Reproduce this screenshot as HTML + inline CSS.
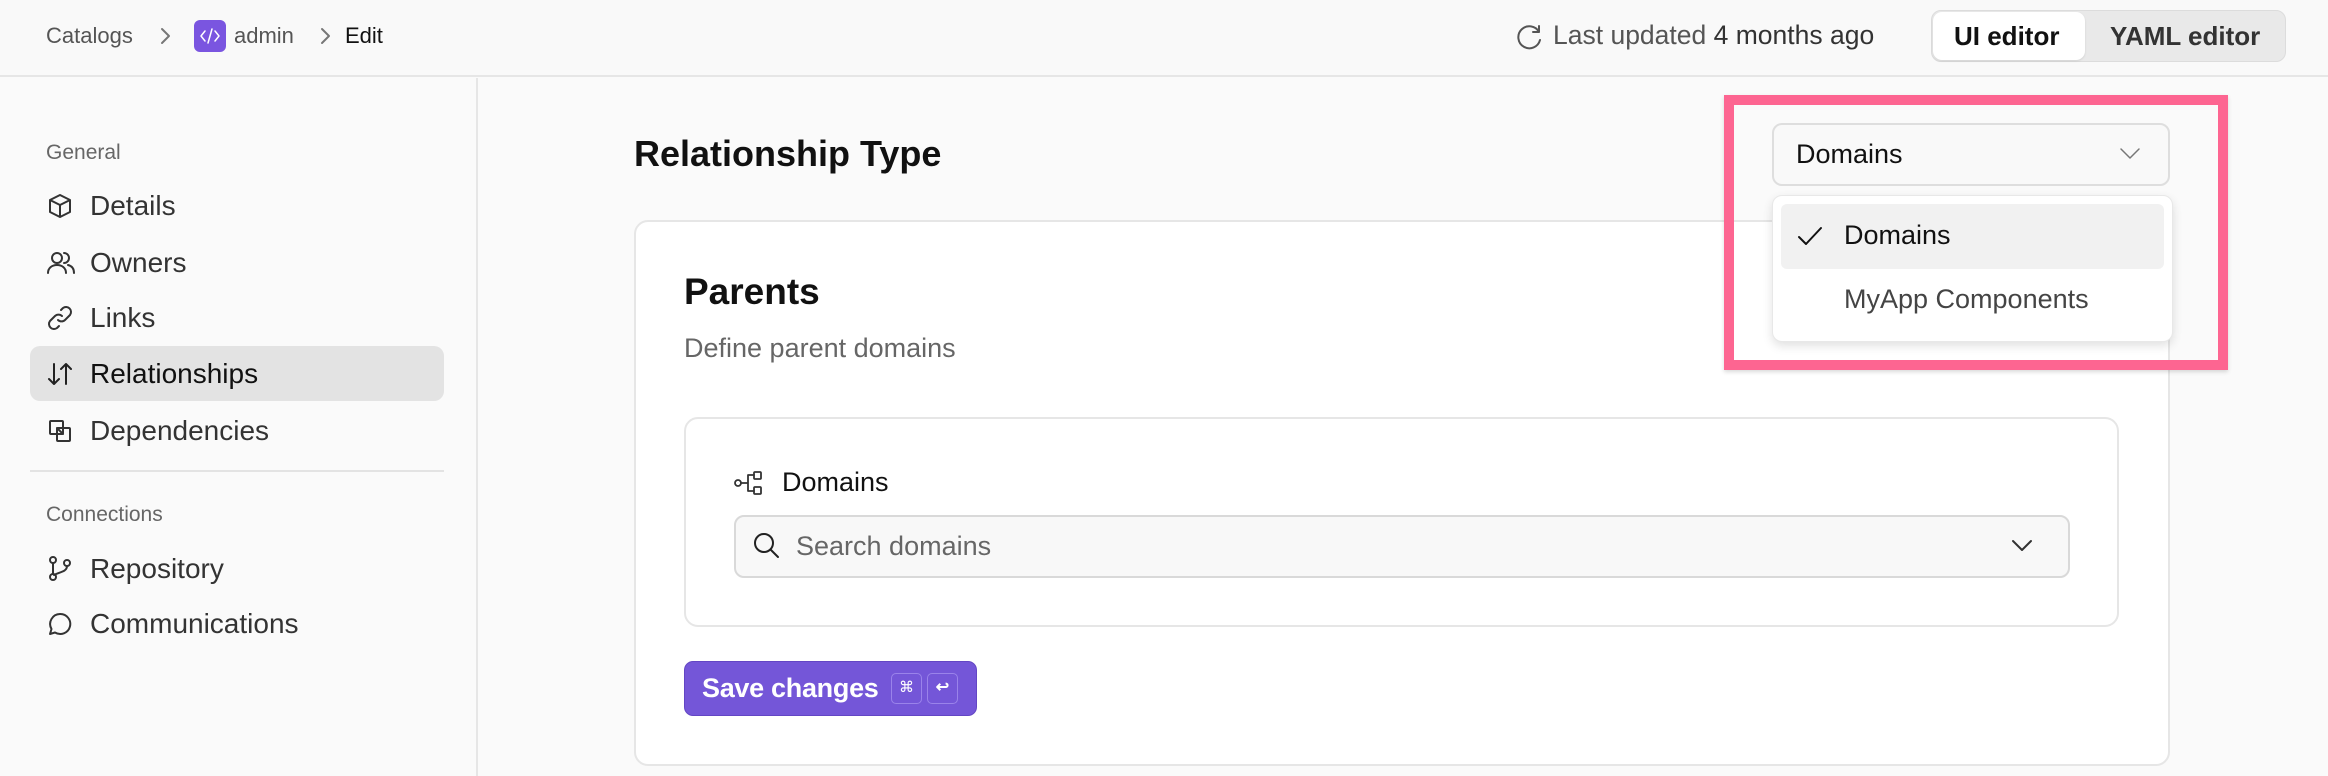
<!DOCTYPE html>
<html><head><meta charset="utf-8"><style>
*{box-sizing:border-box;margin:0;padding:0}
body{width:2328px;height:776px;overflow:hidden;background:#fafafa;font-family:"Liberation Sans",sans-serif;color:#1a1a1a;position:relative}
.a{position:absolute;white-space:nowrap}
svg{position:absolute;fill:none;stroke:#333;stroke-width:2;stroke-linecap:round;stroke-linejoin:round}
.nav{font-size:28px;color:#333}
</style></head><body>
<div class="a" style="left:0;top:0;width:2328px;height:77px;border-bottom:2px solid #e6e6e6;background:#f9f9f9"></div>
<div class="a" style="left:46px;top:23px;font-size:22px;color:#555">Catalogs</div>
<svg style="left:158px;top:26px" width="14" height="20" viewBox="0 0 14 20"><path d="M4 3l7 7-7 7" stroke="#777"/></svg>
<div class="a" style="left:194px;top:20px;width:32px;height:32px;background:#7a55e0;border-radius:6px"></div>
<svg style="left:198px;top:26px" width="24" height="20" viewBox="0 0 24 20"><path d="M7 5l-4 5 4 5M17 5l4 5-4 5M14 3l-4 14" stroke="#fff" stroke-width="1.5"/></svg>
<div class="a" style="left:234px;top:23px;font-size:22px;color:#555">admin</div>
<svg style="left:318px;top:26px" width="14" height="20" viewBox="0 0 14 20"><path d="M4 3l7 7-7 7" stroke="#777"/></svg>
<div class="a" style="left:345px;top:23px;font-size:22px;color:#111">Edit</div>
<svg style="left:1515px;top:22px" width="30" height="30" viewBox="0 0 30 30"><path d="M24 10A11 11 0 1 0 25 18M24 4v6h-6" stroke="#555"/></svg>
<div class="a" style="left:1553px;top:20px;font-size:26.5px;color:#555">Last updated <span style="color:#333">4 months ago</span></div>
<div class="a" style="left:1931px;top:10px;width:355px;height:52px;background:#e9e9e9;border:1.5px solid #dcdcdc;border-radius:10px"></div>
<div class="a" style="left:1933px;top:12px;width:152px;height:48px;background:#fff;border-radius:9px;box-shadow:0 1px 2px rgba(0,0,0,.1)"></div>
<div class="a" style="left:1954px;top:21px;font-size:26px;font-weight:bold;color:#111">UI editor</div>
<div class="a" style="left:2110px;top:21px;font-size:26px;font-weight:bold;color:#333">YAML editor</div>
<div class="a" style="left:476px;top:78px;width:2px;height:698px;background:#e6e6e6"></div>
<div class="a" style="left:46px;top:141px;font-size:21px;color:#666">General</div>
<div class="a" style="left:30px;top:346px;width:414px;height:55px;background:#e3e3e3;border-radius:10px"></div>
<svg style="left:46px;top:192px" width="28" height="28" viewBox="0 0 28 28"><path d="M14 3l10 5v12l-10 5-10-5V8zM4 8l10 5 10-5M14 13v12"/></svg>
<div class="a nav" style="left:90px;top:190px">Details</div>
<svg style="left:46px;top:249px" width="30" height="28" viewBox="0 0 30 28"><circle cx="11" cy="9" r="5"/><path d="M2 24c0-5 4-8 9-8s9 3 9 8M18 4a5 5 0 0 1 0 10M22 16c4 1 6 4 6 8"/></svg>
<div class="a nav" style="left:90px;top:247px">Owners</div>
<svg style="left:46px;top:304px" width="28" height="28" viewBox="0 0 28 28"><path d="M12 16a5 5 0 0 0 7 0l5-5a5 5 0 0 0-7-7l-2 2M16 12a5 5 0 0 0-7 0l-5 5a5 5 0 0 0 7 7l2-2"/></svg>
<div class="a nav" style="left:90px;top:302px">Links</div>
<svg style="left:46px;top:360px" width="28" height="28" viewBox="0 0 28 28"><path d="M8 4v20M3 19l5 5 5-5M20 24V4M15 9l5-5 5 5" stroke="#222"/></svg>
<div class="a nav" style="left:90px;top:358px;color:#111">Relationships</div>
<svg style="left:46px;top:417px" width="28" height="28" viewBox="0 0 28 28"><rect x="4" y="4" width="13" height="13" rx="1"/><rect x="11" y="11" width="13" height="13" rx="1"/><path d="M11 11l6 6"/></svg>
<div class="a nav" style="left:90px;top:415px">Dependencies</div>
<div class="a" style="left:30px;top:470px;width:414px;height:2px;background:#e3e3e3"></div>
<div class="a" style="left:46px;top:503px;font-size:21px;color:#666">Connections</div>
<svg style="left:46px;top:555px" width="28" height="28" viewBox="0 0 28 28"><circle cx="7" cy="22" r="3"/><circle cx="7" cy="5" r="3"/><circle cx="21" cy="8" r="3"/><path d="M7 8v11M21 11c0 6-8 6-13 9"/></svg>
<div class="a nav" style="left:90px;top:553px">Repository</div>
<svg style="left:46px;top:610px" width="28" height="28" viewBox="0 0 28 28"><path d="M14 4a10 10 0 1 1-5 18.5L4 24l1.5-5A10 10 0 0 1 14 4z"/></svg>
<div class="a nav" style="left:90px;top:608px">Communications</div>
<div class="a" style="left:634px;top:133px;font-size:36px;font-weight:bold;color:#111">Relationship Type</div>
<div class="a" style="left:634px;top:220px;width:1536px;height:546px;background:#fff;border:2px solid #e6e6e6;border-radius:14px"></div>
<div class="a" style="left:684px;top:271px;font-size:37px;font-weight:bold;color:#111">Parents</div>
<div class="a" style="left:684px;top:333px;font-size:27px;color:#666">Define parent domains</div>
<div class="a" style="left:684px;top:417px;width:1435px;height:210px;background:#fff;border:2px solid #e6e6e6;border-radius:14px"></div>
<svg style="left:734px;top:470px" width="30" height="26" viewBox="0 0 30 26"><circle cx="4" cy="13" r="3" stroke-width="1.8"/><rect x="20" y="2" width="7" height="7" rx="1" stroke-width="1.8"/><rect x="20" y="17" width="7" height="7" rx="1" stroke-width="1.8"/><path d="M7 13h7M14 5v16M14 5h6M14 21h6" stroke-width="1.8"/></svg>
<div class="a" style="left:782px;top:467px;font-size:27px;color:#111">Domains</div>
<div class="a" style="left:734px;top:515px;width:1336px;height:63px;background:#f8f8f8;border:2px solid #d9d9d9;border-radius:10px"></div>
<svg style="left:752px;top:531px" width="30" height="30" viewBox="0 0 30 30"><circle cx="12" cy="12" r="9" stroke="#222"/><path d="M19 19l7 7" stroke="#222"/></svg>
<div class="a" style="left:796px;top:531px;font-size:27px;color:#666">Search domains</div>
<svg style="left:2010px;top:537px" width="24" height="16" viewBox="0 0 24 16"><path d="M3 4l9 9 9-9" stroke="#333"/></svg>
<div class="a" style="left:684px;top:661px;width:293px;height:55px;background:#7456d8;border:1.5px solid #6346c4;border-radius:9px"></div>
<div class="a" style="left:702px;top:673px;font-size:27px;font-weight:bold;color:#fff;letter-spacing:-0.3px">Save changes</div>
<div class="a" style="left:891px;top:673px;width:31px;height:31px;border:1.5px solid #9a83ea;border-radius:5px;color:#fff;font-size:15px;text-align:center;line-height:28px">⌘</div>
<div class="a" style="left:927px;top:673px;width:31px;height:31px;border:1.5px solid #9a83ea;border-radius:5px;color:#fff;font-size:16px;text-align:center;line-height:28px;font-weight:bold">↩</div>
<div class="a" style="left:1772px;top:123px;width:398px;height:63px;background:#f9f9f9;border:2px solid #dedede;border-radius:10px"></div>
<div class="a" style="left:1796px;top:139px;font-size:27px;color:#111">Domains</div>
<svg style="left:2118px;top:146px" width="24" height="16" viewBox="0 0 24 16"><path d="M3 3l9 9 9-9" stroke="#777" stroke-width="1.5"/></svg>
<div class="a" style="left:1772px;top:195px;width:401px;height:147px;background:#fff;border:1.5px solid #e8e8e8;border-radius:10px;box-shadow:0 4px 10px rgba(0,0,0,.12)"></div>
<div class="a" style="left:1781px;top:204px;width:383px;height:65px;background:#f1f1f1;border-radius:6px"></div>
<svg style="left:1796px;top:224px" width="28" height="24" viewBox="0 0 28 24"><path d="M3 13l7 7L25 4" stroke="#111" stroke-width="2"/></svg>
<div class="a" style="left:1844px;top:220px;font-size:27px;color:#111">Domains</div>
<div class="a" style="left:1844px;top:284px;font-size:27px;color:#444">MyApp Components</div>
<div class="a" style="left:1724px;top:95px;width:504px;height:275px;border:10px solid #fd6591;box-shadow:0 2px 4px rgba(0,0,0,.15)"></div>
</body></html>
